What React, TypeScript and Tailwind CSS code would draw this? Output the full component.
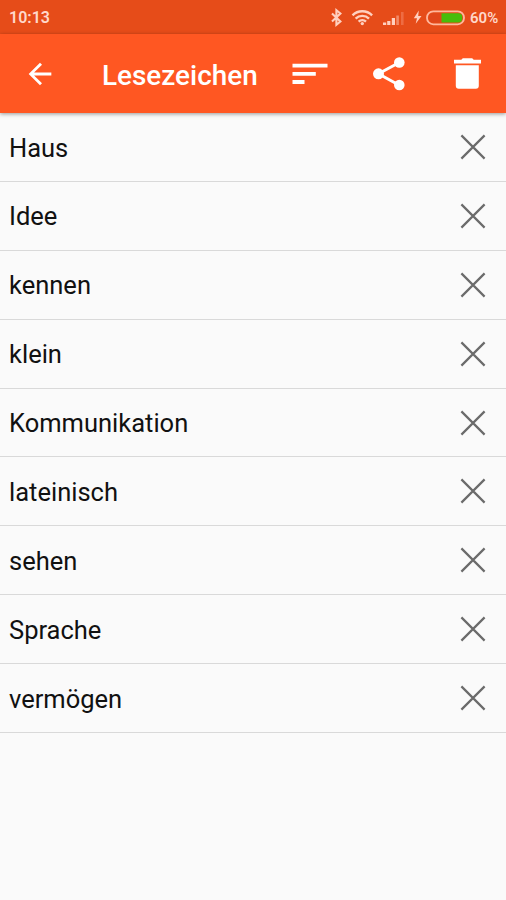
import React from 'react'

const bookmarks = [
    { id: 1, word: 'Haus' },
    { id: 2, word: 'Idee' },
    { id: 3, word: 'kennen' },
    { id: 4, word: 'klein' },
    { id: 5, word: 'Kommunikation' },
    { id: 6, word: 'lateinisch' },
    { id: 7, word: 'sehen' },
    { id: 8, word: 'Sprache' },
    { id: 9, word: 'vermögen' },
]

function StatusIcons() {
    return (
        <svg width="140" height="34" viewBox="326 0 140 34" fill="none" className="block flex-none">
            {/* bluetooth */}
            <path d="M332 13.500l8.400 8-4 3.200V10.300l4 3.200-8.400 8" stroke="#ffd0bf" strokeWidth="2.1" />
            {/* wifi */}
            <g stroke="#ffd0bf" strokeWidth="2.4">
                <path d="M352.500 15.300a14 14 0 0 1 19.600 0" />
                <path d="M355.600 18.600a9.600 9.600 0 0 1 13.400 0" />
                <path d="M358.600 21.700a5.400 5.400 0 0 1 7.400 0" />
            </g>
            <circle cx="362.300" cy="23.600" r="1.700" fill="#ffd0bf" />
            {/* signal */}
            <path d="M383 25v-2.500h3.200V25zM387.200 25v-4h3.200v4zM391.800 25v-7h3.200v7z" fill="#ffd0bf" />
            <path d="M396.300 25v-9.500h2.600V25z" fill="#f28a68" />
            <path d="M401 25V12h2.600v13z" fill="#ee6c43" />
            {/* charging */}
            <path d="M418.800 10.500l-5 7.800h3.200l-1.300 5.500 5.800-7.800h-3.300z" fill="#ffd0bf" />
            <rect x="427" y="11.300" width="37" height="13" rx="6.300" stroke="#ffb79d" strokeWidth="1.800" />
            <path d="M432.500 13.200h9v9.200h-9a3.500 3.500 0 0 1-3.500-3.500v-2.200a3.500 3.500 0 0 1 3.500-3.500z" fill="#e0461a" />
            <path d="M441.500 13.200h17a3.700 3.700 0 0 1 3.700 3.700v1.800a3.700 3.700 0 0 1-3.700 3.700h-17z" fill="#48bd0a" />
        </svg>
    )
}

function StatusBar() {
    return (
        <div className="flex h-[34px] flex-none items-center bg-[#e64c19] pl-[9px] text-[#ffd8ca]">
            <span className="w-[317px] pt-[2px] text-[16px] font-semibold">10:13</span>
            <StatusIcons />
            <span className="pl-[4px] pt-[2px] text-[15px] font-semibold">60%</span>
        </div>
    )
}

function Toolbar() {
    return (
        <header className="relative flex h-[79px] flex-none items-center bg-[#ff5722] text-white shadow-[0_1px_4px_rgba(0,0,0,0.4)]">
            <button aria-label="Zurück" className="ml-[23px] flex-none">
                <svg width="34" height="34" viewBox="0 0 24 24" fill="currentColor" className="block">
                    <path d="M20 11H7.830l5.590-5.590L12 4l-8 8 8 8 1.410-1.410L7.830 13H20v-2z" />
                </svg>
            </button>
            <h1 className="ml-[45px] w-[190px] pt-[4px] text-[27.900px] leading-8 font-medium">Lesezeichen</h1>
            <button aria-label="Sortieren" className="flex-none">
                <svg width="36" height="34" viewBox="292 57 36 34" fill="currentColor" className="block">
                    <path d="M292.500 63.800h35v3.600h-35zM292.500 71.900h23.300v3.800h-23.300zM292.500 80h12v3.900h-12z" />
                </svg>
            </button>
            <button aria-label="Teilen" className="ml-[44px] flex-none">
                <svg width="34" height="36" viewBox="372 56 34 36" fill="currentColor" className="block">
                    <path d="M399.300 62.500l-20.800 11.300 20.800 11.400" fill="none" stroke="currentColor" strokeWidth="3" />
                    <circle cx="399.300" cy="62.500" r="5.300" />
                    <circle cx="378.500" cy="73.800" r="5.500" />
                    <circle cx="399.300" cy="85" r="5.300" />
                </svg>
            </button>
            <button aria-label="Löschen" className="ml-[47px] flex-none">
                <svg width="30" height="36" viewBox="453 56 30 36" fill="currentColor" className="block">
                    <path d="M462.800 58.200h9.400l1.500 1.500h7.300v3.800h-27v-3.800h7.300zM455.800 65.200h23v20.600a3 3 0 0 1-3 3h-17a3 3 0 0 1-3-3z" />
                </svg>
            </button>
        </header>
    )
}

export default function App() {
    return (
        <div className="flex h-[900px] w-[506px] flex-col overflow-hidden bg-[#fafafa] font-[Roboto,sans-serif]">
            <StatusBar />
            <Toolbar />
            <ul className="flex flex-col">
                {bookmarks.map((item) => (
                    <li key={item.id} className="flex h-[68.900px] flex-none items-center justify-between border-b border-[#d9d9d9] pr-[20px] pl-[9px]">
                        <span className="pt-[1.200px] text-[25.500px] leading-8 text-[#111]">{item.word}</span>
                        <button aria-label="Entfernen">
                            <svg width="26" height="26" viewBox="0 0 26 26" fill="none" stroke="#6b6b6b" strokeWidth="2.2" className="block">
                                <path d="M1.400 1.400l23.200 23.200M24.600 1.400L1.400 24.600" />
                            </svg>
                        </button>
                    </li>
                ))}
            </ul>
        </div>
    )
}
